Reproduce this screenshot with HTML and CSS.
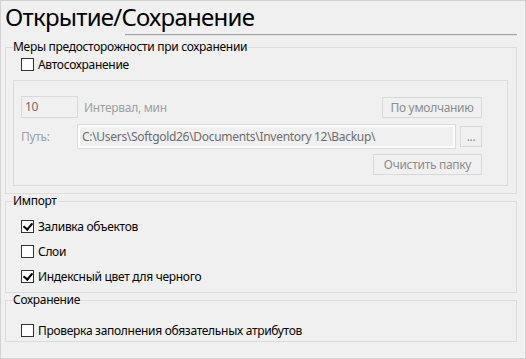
FILE: index.html
```html
<!DOCTYPE html>
<html lang="ru">

<head>
  <meta charset="UTF-8">
  <title>Открытие/Сохранение</title>
  <link rel="stylesheet" href="styles.css">
</head>

<body>
  <div class="window">
    <div class="pageHead">
      <h1 class="pageTitle">Открытие/Сохранение</h1>
      <div class="headLine"></div>
    </div>

    <fieldset class="group groupFirst">
      <legend>Меры предосторожности при сохранении</legend>
      <label class="check checkTop"><span class="box"></span>Автосохранение</label>

      <div class="innerPanel">
        <div class="panelRow rowInterval">
          <div class="field fieldSmall">10</div>
          <span class="dimLabel">Интервал, мин</span>
          <div class="btn btnDefault">По умолчанию</div>
        </div>
        <div class="panelRow rowPath">
          <span class="dimLabel pathLabel">Путь:</span>
          <div class="field fieldPath">C:\Users\Softgold26\Documents\Inventory 12\Backup\</div>
          <div class="btn btnDots">...</div>
        </div>
        <div class="panelRow rowClear">
          <div class="btn btnClear">Очистить папку</div>
        </div>
      </div>
    </fieldset>

    <fieldset class="group groupImport">
      <legend>Импорт</legend>
      <label class="check"><span class="box checked"></span>Заливка объектов</label>
      <label class="check"><span class="box"></span>Слои</label>
      <label class="check"><span class="box checked"></span>Индексный цвет для черного</label>
    </fieldset>

    <fieldset class="group groupSave">
      <legend>Сохранение</legend>
      <label class="check"><span class="box"></span>Проверка заполнения обязательных атрибутов</label>
    </fieldset>
  </div>
</body>

</html>
```

FILE: styles.css
```css
* {
  box-sizing: border-box;
}

body {
  margin: 0;
  font-family: "Noto Sans", "Open Sans", sans-serif;
  font-size: 12px;
  letter-spacing: -0.3px;
  color: #000;
  background: #f0f0f0;
}

.window {
  width: 526px;
  height: 359px;
  border: 1px solid #d2d2d2;
  background: #f0f0f0;
  padding: 0 8px 0 4px;
}

.pageHead {
  height: 39px;
}

.pageTitle {
  margin: 0;
  padding-top: 1px;
  font-size: 24px;
  font-weight: 400;
  line-height: 30px;
  letter-spacing: -0.75px;
}

.headLine {
  margin: 2px 0 0 120px;
  height: 2px;
  border-top: 1px solid #a0a0a0;
  border-bottom: 1px solid #e3e3e3;
}

.group {
  margin: 0;
  padding: 0;
  border: 1px solid #dcdcdc;
  min-width: 0;
}

.group legend {
  padding: 0 1px 0 0;
  margin-left: 7px;
  line-height: 14px;
}

.groupFirst {
  height: 154px;
}

.groupImport {
  height: 99px;
}

.groupSave {
  height: 49px;
}

.check {
  display: flex;
  align-items: center;
  height: 25px;
  padding-left: 15px;
}

.groupImport .check:first-of-type {
  margin-top: 6px;
}

.groupSave .check {
  margin-top: 11px;
}

.checkTop {
  height: 16px;
  margin-top: 2px;
}

.box {
  width: 13px;
  height: 13px;
  border: 1px solid #333;
  background: #fff;
  margin-right: 4px;
  flex: none;
  position: relative;
}

.box.checked::after {
  content: "";
  position: absolute;
  left: 3px;
  top: 0px;
  width: 4px;
  height: 7px;
  border-right: 2px solid #000;
  border-bottom: 2px solid #000;
  transform: rotate(40deg);
}

.innerPanel {
  margin: 8px 8px 0 7px;
  height: 106px;
  border: 1px solid #dcdcdc;
  padding: 15px 25px 0 7px;
}

.panelRow {
  display: flex;
  align-items: center;
}

.field {
  height: 22px;
  border: 1px solid #d9d9d9;
  background: #f0f0f0;
  color: #6d6d6d;
  padding: 0 3px;
  line-height: 20px;
  white-space: nowrap;
  overflow: hidden;
}

.fieldSmall {
  width: 57px;
}

.dimLabel {
  color: #a0a0a0;
}

.rowInterval .dimLabel {
  margin-left: 6px;
}

.btn {
  height: 21px;
  border: 1px solid #d9d9d9;
  background: #f0f0f0;
  color: #8d8d8d;
  display: flex;
  align-items: center;
  justify-content: center;
  white-space: nowrap;
}

.btnDefault {
  width: 100px;
  margin-left: auto;
}

.rowPath {
  margin-top: 7px;
}

.pathLabel {
  width: 57px;
}

.fieldPath {
  width: 377px;
  height: 23px;
  border: 2px solid #fcfcfc;
  outline: 1px solid #dcdcdc;
  padding: 0 2px;
  line-height: 19px;
}

.btnDots {
  width: 22px;
  margin-left: auto;
  line-height: 10px;
}

.rowClear {
  justify-content: flex-end;
  margin-top: 6px;
}

.btnClear {
  width: 109px;
}
```
